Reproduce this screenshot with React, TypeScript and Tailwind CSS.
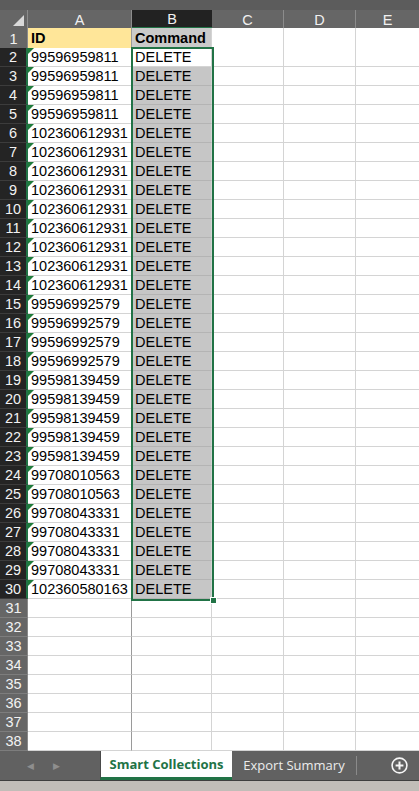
import React from 'react';

// sheet data: column A ids, column B commands
const ids = [
  '99596959811', '99596959811', '99596959811', '99596959811',
  '102360612931', '102360612931', '102360612931', '102360612931', '102360612931',
  '102360612931', '102360612931', '102360612931', '102360612931',
  '99596992579', '99596992579', '99596992579', '99596992579',
  '99598139459', '99598139459', '99598139459', '99598139459', '99598139459',
  '99708010563', '99708010563',
  '99708043331', '99708043331', '99708043331', '99708043331',
  '102360580163',
];

const cellFont = { fontFamily: '"Liberation Sans", Arial, sans-serif' };
const tabFont = { fontFamily: '"Open Sans", "Noto Sans", sans-serif' };

const gridCols = 'grid grid-cols-[28px_104px_80px_72px_72px_63px]';

function RowHeader({ n, selected }: { n: number; selected: boolean }) {
  return (
    <div
      className={
        selected
          ? 'flex items-center justify-center bg-[#242424] text-[#f2f2f2] border-b border-[#3c3c3c] border-r-2 border-r-[#217346] text-[14.5px] leading-none'
          : 'flex items-center justify-center bg-[#666666] text-[#f2f2f2] border-b border-[#7d7d7d] border-r border-r-[#8a8a8a] text-[14.5px] leading-none'
      }
    >
      {n}
    </div>
  );
}

function EmptyCells() {
  return (
    <>
      <div className="border-b border-r border-[#d4d4d4] bg-white" />
      <div className="border-b border-r border-[#d4d4d4] bg-white" />
      <div className="border-b border-[#d4d4d4] bg-white" />
    </>
  );
}

export default function App() {
  return (
    <div className="relative w-[419px] h-[791px] overflow-hidden bg-white select-none" style={cellFont}>
      {/* top strip */}
      <div className="h-[10px] bg-[#5c5c5c]" />

      {/* column headers */}
      <div className={`${gridCols} h-[18px] bg-[#666666] text-[#f0f0f0] text-[14.5px] leading-none`}>
        <div className="relative border-r border-[#8c8c8c]">
          <div className="absolute right-[3px] bottom-[3px] w-0 h-0 border-l-[11px] border-l-transparent border-b-[11px] border-b-[#d9d9d9]" />
        </div>
        <div className="flex items-center justify-center border-r border-[#8c8c8c] pt-[2px]">A</div>
        <div className="flex items-center justify-center bg-[#222222] border-b-2 border-[#217346] pt-[2px]">B</div>
        <div className="flex items-center justify-center border-r border-[#8c8c8c] pt-[2px]">C</div>
        <div className="flex items-center justify-center border-r border-[#8c8c8c] pt-[2px]">D</div>
        <div className="flex items-center justify-center pt-[2px]">E</div>
      </div>

      {/* row 1 (frozen) */}
      <div className={`${gridCols} h-[20px] text-[14.5px] text-black`}>
        <RowHeader n={1} selected={false} />
        <div className="flex items-center pl-[3px] bg-[#ffe699] font-bold border-b border-b-[#9e9e9e] border-r border-r-[#9a9a9a]">ID</div>
        <div className="flex items-center pl-[3px] bg-[#cacaca] font-bold border-b border-b-[#9e9e9e] border-r border-r-[#d4d4d4]">Command</div>
        <div className="border-b border-b-[#9e9e9e] border-r border-r-[#d4d4d4]" />
        <div className="border-b border-b-[#9e9e9e] border-r border-r-[#d4d4d4]" />
        <div className="border-b border-b-[#9e9e9e]" />
      </div>

      {/* data rows 2-30 */}
      {ids.map((id, i) => (
        <div key={i} className={`${gridCols} h-[19px] text-[14.5px] text-black leading-none`}>
          <RowHeader n={i + 2} selected={true} />
          <div className="relative flex items-center pl-[3px] bg-white border-b border-[#d4d4d4] border-r border-r-[#9a9a9a]">
            <div className="absolute left-0 top-0 w-0 h-0 border-t-[6px] border-t-[#1e7b3a] border-r-[6px] border-r-transparent" />
            {id}
          </div>
          <div
            className={
              i === 0
                ? 'flex items-center pl-[3px] bg-white border-b border-r border-[#d4d4d4]'
                : 'flex items-center pl-[3px] bg-[#c6c6c6] border-b border-[#b4b4b4] border-r border-r-[#d4d4d4]'
            }
          >
            DELETE
          </div>
          <EmptyCells />
        </div>
      ))}

      {/* empty rows 31-38 */}
      {[31, 32, 33, 34, 35, 36, 37, 38].map(n => (
        <div key={n} className={`${gridCols} h-[19px] text-[14.5px]`}>
          <RowHeader n={n} selected={false} />
          <div className="bg-white border-b border-[#d4d4d4] border-r border-r-[#9a9a9a]" />
          <div className="bg-white border-b border-r border-[#d4d4d4]" />
          <EmptyCells />
        </div>
      ))}

      {/* selection outline B2:B30 */}
      <div className="absolute left-[131px] top-[47px] w-[83px] h-[554px] border-2 border-[#217346] pointer-events-none">
        <div className="absolute -right-[5px] -bottom-[5px] w-[7px] h-[7px] bg-[#217346] border border-white" />
      </div>

      {/* sheet tabs */}
      <div className="flex h-[30px] bg-[#616161] border-b border-[#3e3e3e]" style={tabFont}>
        <div className="flex w-[100px] items-center gap-[19px] pl-[27px] text-[#8e8e8e] text-[9px]">
          <span>◀</span>
          <span>▶</span>
        </div>
        <div className="flex w-[132px] items-center justify-center bg-white border-b-[3px] border-[#217346] border-l border-l-[#4a4a4a] text-[#217346] font-bold text-[13px] pt-[1px]">
          Smart Collections
        </div>
        <div className="flex w-[125px] items-center justify-center text-[#ececec] text-[13px] border-r border-[#8a8a8a] my-[5px]">
          Export Summary
        </div>
        <div className="flex flex-1 items-center justify-center pl-[22px]">
          <svg width="17" height="17" viewBox="0 0 17 17" fill="none" stroke="#f5f5f5" strokeWidth="1.6">
            <circle cx="8.5" cy="8.5" r="7.4" />
            <path d="M8.5 4.6v7.8M4.6 8.5h7.8" strokeWidth="2" />
          </svg>
        </div>
      </div>

      {/* status strip */}
      <div className="h-[10px] bg-[#c1bdb8]" />
    </div>
  );
}
